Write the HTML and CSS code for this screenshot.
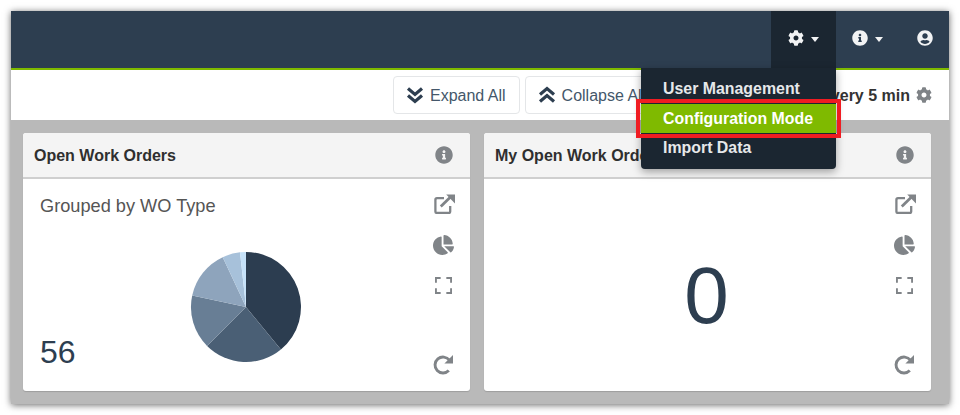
FILE: index.html
```html
<!DOCTYPE html>
<html lang="en">
<head>
<meta charset="utf-8">
<title>Dashboard</title>
<link rel="stylesheet" href="styles.css">
</head>
<body>
<svg class="defs" aria-hidden="true">
  <symbol id="i-info" viewBox="0 0 512 512"><path d="M256 8C119.043 8 8 119.083 8 256c0 136.997 111.043 248 248 248s248-111.003 248-248C504 119.083 392.957 8 256 8zm0 110c23.196 0 42 18.804 42 42s-18.804 42-42 42-42-18.804-42-42 18.804-42 42-42zm56 254c0 6.627-5.373 12-12 12h-88c-6.627 0-12-5.373-12-12v-24c0-6.627 5.373-12 12-12h12v-64h-12c-6.627 0-12-5.373-12-12v-24c0-6.627 5.373-12 12-12h64c6.627 0 12 5.373 12 12v100h12c6.627 0 12 5.373 12 12v24z"/></symbol>
  <symbol id="i-cog" viewBox="0 0 512 512"><path d="M487.4 315.7l-42.6-24.6c4.3-23.2 4.3-47 0-70.2l42.6-24.6c4.9-2.8 7.1-8.6 5.5-14-11.1-35.6-30-67.8-54.7-94.6-3.8-4.1-10-5.1-14.8-2.3L380.8 110c-17.9-15.4-38.5-27.3-60.8-35.1V25.8c0-5.6-3.9-10.5-9.4-11.7-36.7-8.2-74.3-7.8-109.2 0-5.5 1.2-9.4 6.1-9.4 11.7V75c-22.2 7.9-42.8 19.8-60.8 35.1L88.7 85.5c-4.9-2.8-11-1.9-14.8 2.3-24.7 26.7-43.6 58.9-54.7 94.6-1.7 5.4.6 11.2 5.5 14L67.3 221c-4.3 23.2-4.3 47 0 70.2l-42.6 24.6c-4.9 2.8-7.1 8.6-5.5 14 11.1 35.6 30 67.8 54.7 94.6 3.8 4.1 10 5.1 14.8 2.3l42.6-24.6c17.9 15.4 38.5 27.3 60.8 35.1v49.2c0 5.6 3.9 10.5 9.4 11.7 36.7 8.2 74.3 7.8 109.2 0 5.5-1.2 9.4-6.1 9.4-11.7v-49.2c22.2-7.9 42.8-19.8 60.8-35.1l42.6 24.6c4.9 2.8 11 1.9 14.8-2.3 24.7-26.7 43.6-58.9 54.7-94.6 1.5-5.5-.7-11.3-5.6-14.1zM256 336c-44.1 0-80-35.9-80-80s35.9-80 80-80 80 35.9 80 80-35.9 80-80 80z"/></symbol>
  <symbol id="i-user" viewBox="0 0 496 512"><path d="M248 8C111 8 0 119 0 256s111 248 248 248 248-111 248-248S385 8 248 8zm0 96c48.6 0 88 39.4 88 88s-39.4 88-88 88-88-39.4-88-88 39.4-88 88-88zm0 344c-58.7 0-111.3-26.6-146.5-68.2 18.8-35.4 55.6-59.8 98.5-59.8 2.4 0 4.8.4 7.1 1.1 13 4.2 26.6 6.9 40.9 6.9 14.3 0 28-2.7 40.9-6.9 2.3-.7 4.7-1.1 7.1-1.1 42.9 0 79.7 24.4 98.5 59.8C359.3 421.4 306.7 448 248 448z"/></symbol>
  <symbol id="i-pie" viewBox="0 0 544 512"><path d="M527.79 288H290.5l158.03 158.03c6.04 6.04 15.98 6.53 22.19.68 38.7-36.46 65.32-85.61 73.13-140.86 1.34-9.46-6.51-17.85-16.06-17.85zm-15.83-64.8C503.72 103.74 408.26 8.28 288.8.04 279.68-.59 272 7.1 272 16.24V240h223.77c9.14 0 16.82-7.68 16.19-16.8zM224 288V50.71c0-9.55-8.39-17.4-17.84-16.06C86.99 51.49-4.1 155.6.14 280.37 4.5 408.51 114.83 513.59 243.03 511.98c50.4-.63 96.97-16.87 135.26-44.03 7.9-5.6 8.42-17.23 1.57-24.08L224 288z"/></symbol>
  <symbol id="i-ext" viewBox="0 0 21 20"><path d="M10 4.2H3a1.6 1.6 0 0 0-1.6 1.6v11.6A1.6 1.6 0 0 0 3 19h11.6a1.6 1.6 0 0 0 1.6-1.6V12" fill="none" stroke="currentColor" stroke-width="2.3"/><path d="M6.8 12.5 17 2.6" fill="none" stroke="currentColor" stroke-width="2.8"/><path d="M12.2 0.6H21V9.4Z"/></symbol>
  <symbol id="i-exp" viewBox="0 0 18 18"><path d="M1 6V1h5M12 1h5v5M17 12v5h-5M6 17H1v-5" fill="none" stroke="currentColor" stroke-width="2"/></symbol>
  <symbol id="i-redo" viewBox="0 0 20 20"><path d="M16.4 5.2A8 8 0 1 0 15.8 15.6" fill="none" stroke="currentColor" stroke-width="2.9"/><path d="M11.4 8.4H20V0Z"/></symbol>
  <symbol id="i-down" viewBox="0 0 18 18"><path d="M2 2.5 9 8.5 16 2.5M2 9.5 9 15.5 16 9.5" fill="none" stroke="currentColor" stroke-width="3.2"/></symbol>
  <symbol id="i-up" viewBox="0 0 18 18"><path d="M2 8.5 9 2.5 16 8.5M2 15.5 9 9.5 16 15.5" fill="none" stroke="currentColor" stroke-width="3.2"/></symbol>
</svg>
<div class="window">
  <header class="navbar">
    <div class="nav-item nav-item-open">
      <svg class="nav-icon"><use href="#i-cog"/></svg><span class="caret"></span>
      <ul class="menu">
        <li class="menu-item">User Management</li>
        <li class="menu-item menu-item-active">Configuration Mode</li>
        <li class="menu-item">Import Data</li>
      </ul>
    </div>
    <div class="nav-item nav-item-info">
      <svg class="nav-icon"><use href="#i-info"/></svg><span class="caret"></span>
    </div>
    <div class="nav-item nav-item-user">
      <svg class="nav-icon"><use href="#i-user"/></svg>
    </div>
  </header>
  <div class="toolbar">
    <button class="btn"><svg class="btn-icon"><use href="#i-down"/></svg>Expand All</button>
    <button class="btn"><svg class="btn-icon"><use href="#i-up"/></svg>Collapse All</button>
    <div class="refresh">Refresh every 5 min<svg class="refresh-icon"><use href="#i-cog"/></svg></div>
  </div>
  <main class="board">
    <section class="card">
      <div class="card-head"><h2 class="card-title">Open Work Orders</h2><svg class="head-icon"><use href="#i-info"/></svg></div>
      <div class="card-body">
        <div class="chart-area">
          <div class="subtitle">Grouped by WO Type</div>
          <svg class="pie" viewBox="-56 -56 112 112" width="112" height="112">
            <path class="s1" d="M0 0V-55A55 55 0 0 1 34.9 42.5Z"/>
            <path class="s2" d="M0 0L34.9 42.5A55 55 0 0 1 -38.9 38.9Z"/>
            <path class="s3" d="M0 0L-38.9 38.9A55 55 0 0 1 -53.8 -11.6Z"/>
            <path class="s4" d="M0 0L-53.8 -11.6A55 55 0 0 1 -23.3 -49.8Z"/>
            <path class="s5" d="M0 0L-23.3 -49.8A55 55 0 0 1 -6 -54.7Z"/>
            <path class="s6" d="M0 0L-6 -54.7A55 55 0 0 1 0 -55Z"/>
          </svg>
          <div class="count">56</div>
        </div>
        <div class="actions">
          <svg class="act act-ext"><use href="#i-ext"/></svg>
          <svg class="act"><use href="#i-pie"/></svg>
          <svg class="act act-exp"><use href="#i-exp"/></svg>
          <svg class="act act-redo"><use href="#i-redo"/></svg>
        </div>
      </div>
    </section>
    <section class="card">
      <div class="card-head"><h2 class="card-title">My Open Work Orders</h2><svg class="head-icon"><use href="#i-info"/></svg></div>
      <div class="card-body">
        <div class="chart-area"><div class="zero">0</div></div>
        <div class="actions">
          <svg class="act act-ext"><use href="#i-ext"/></svg>
          <svg class="act"><use href="#i-pie"/></svg>
          <svg class="act act-exp"><use href="#i-exp"/></svg>
          <svg class="act act-redo"><use href="#i-redo"/></svg>
        </div>
      </div>
    </section>
  </main>
</div>
</body>
</html>
```
FILE: styles.css
```css
* { box-sizing: border-box; }
html, body { margin: 0; padding: 0; background: #fff; }
body { font-family: "Liberation Sans", Arial, sans-serif; overflow: hidden; height: 415px; }
.defs { width: 0; height: 0; display: block; }
svg { fill: currentColor; }

.window {
  margin: 11px 0 0 11px;
  width: 938px;
  height: 393px;
  display: flex;
  flex-direction: column;
  box-shadow: 0 1px 7px rgba(0, 0, 0, 0.6);
}

.navbar {
  height: 59px;
  flex: none;
  display: flex;
  justify-content: flex-end;
  background: #2d3e50;
  border-bottom: 2px solid #7fba00;
  color: #f2f3f4;
}
.nav-item {
  position: relative;
  height: 57px;
  padding: 0 17px;
  display: flex;
  align-items: center;
  gap: 7px;
}
.nav-item-open { background: #1b2631; width: 65px; }
.nav-item-info { padding: 0 19px 0 16px; }
.nav-item-user { padding: 0 16px 0 15px; }
.nav-icon { width: 16px; height: 16px; flex: none; margin-top: -3px; }
.caret {
  width: 0;
  height: 0;
  margin-top: -1px;
  border-left: 4.5px solid transparent;
  border-right: 4.5px solid transparent;
  border-top: 5px solid currentColor;
}
.menu {
  position: absolute;
  top: 100%;
  right: 0;
  z-index: 5;
  width: 195px;
  margin: 0;
  padding: 6px 0;
  list-style: none;
  background: #1b2631;
  border-radius: 0 0 4px 4px;
  box-shadow: 0 3px 8px rgba(0, 0, 0, 0.35);
}
.menu-item {
  position: relative;
  height: 29.5px;
  line-height: 29.5px;
  padding-left: 22px;
  font-size: 15.9px;
  font-weight: 700;
  color: #e6e8ea;
  white-space: nowrap;
}
.menu-item-active { background: #7fba00; color: #fff; }
.menu-item-active::after {
  content: "";
  position: absolute;
  inset: -5px -5px -5px -5px;
  border: 4px solid #f01c22;
}

.toolbar {
  height: 50px;
  flex: none;
  display: flex;
  align-items: center;
  gap: 5px;
  padding: 0 17px 0 382px;
  background: #fff;
}
.btn {
  display: flex;
  align-items: center;
  gap: 6px;
  height: 38px;
  padding: 1px 13px 0 12px;
  font: 400 16px "Liberation Sans", Arial, sans-serif;
  color: #44576a;
  background: #fff;
  border: 1px solid #e4e6e8;
  border-radius: 4px;
  white-space: nowrap;
}
.btn-icon { width: 18px; height: 18px; color: #2d3e50; flex: none; margin-top: -1px; }
.refresh {
  margin-left: auto;
  display: flex;
  align-items: center;
  gap: 6px;
  padding-top: 1px;
  font-size: 16px;
  font-weight: 700;
  color: #333;
  white-space: nowrap;
}
.refresh-icon { width: 16px; height: 16px; color: #7f8387; margin-top: -1px; }

.board {
  flex: 1;
  display: grid;
  grid-template-columns: 447px 447px;
  gap: 14px;
  padding: 13px 18px 13px 12px;
  background: #b9b9b9;
  min-height: 0;
}
.card {
  display: flex;
  flex-direction: column;
  background: #fff;
  border-radius: 3px;
  overflow: hidden;
  box-shadow: 0 1px 1px rgba(0, 0, 0, 0.15);
}
.card-head {
  height: 46px;
  flex: none;
  display: flex;
  align-items: center;
  justify-content: space-between;
  padding: 0 17px 0 11px;
  background: #f4f4f4;
  border-bottom: 2px solid #cfcfcf;
}
.card-title { margin: 2px 0 0; font-size: 16px; font-weight: 700; color: #2f2f2f; white-space: nowrap; }
.head-icon { width: 18px; height: 18px; color: #808488; }
.card-body { flex: 1; display: flex; min-height: 0; padding: 15px 16px 16px 17px; }
.chart-area {
  flex: 1;
  min-width: 0;
  display: grid;
  grid-template-columns: 1fr;
  grid-template-rows: 1fr;
}
.chart-area > * { grid-area: 1 / 1; }
.subtitle { font-size: 18.2px; line-height: 24px; color: #555; }
.pie { justify-self: start; align-self: end; margin: 0 0 12px 150px; }
.count { align-self: end; font-size: 32px; line-height: 38px; color: #2d3e50; margin-bottom: 4px; }
.zero { place-self: center; font-size: 80px; line-height: 90px; color: #2d3e50; margin: 22px 0 0 18px; }
.s1 { fill: #2c3d50; }
.s2 { fill: #4a5f75; }
.s3 { fill: #687e95; }
.s4 { fill: #8ea4bc; }
.s5 { fill: #a7c1da; }
.s6 { fill: #c6e2f9; }

.actions { width: 21px; flex: none; display: flex; flex-direction: column; align-items: center; gap: 21px; color: #808488; }
.act { width: 21px; height: 20px; flex: none; }
.act-ext { transform: translateX(1px); }
.act-exp { width: 17px; height: 17px; margin-top: 1px; }
.act-redo { margin-top: auto; width: 20px; transform: translateX(-1px); }
```
